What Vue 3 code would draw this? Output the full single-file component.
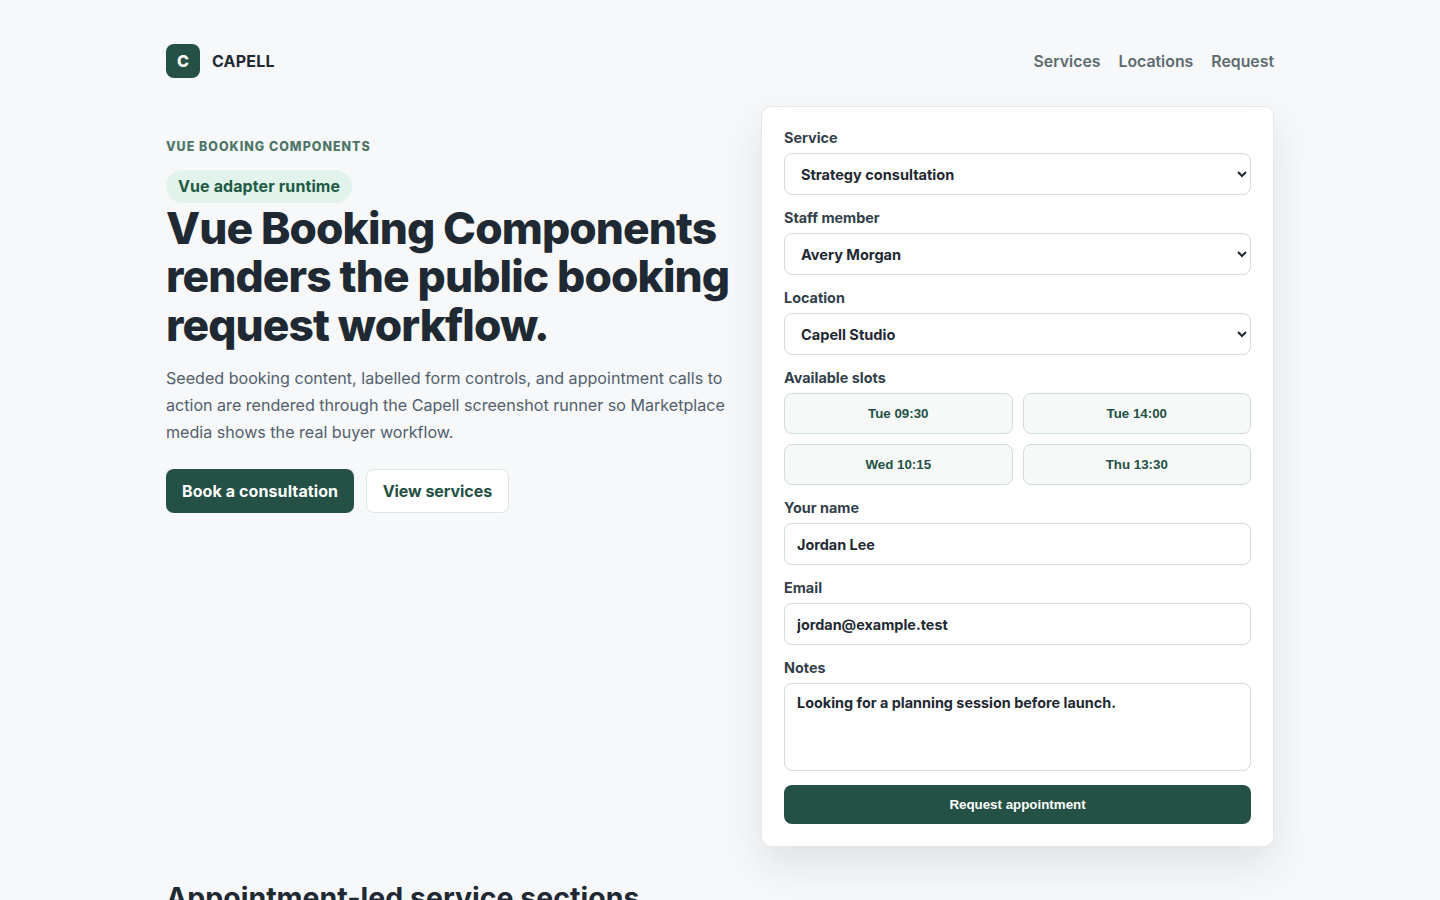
<script setup>
const links = ['Services', 'Locations', 'Request']
const slots = ['Tue 09:30', 'Tue 14:00', 'Wed 10:15', 'Thu 13:30']
const selects = [
  { label: 'Service', value: 'Strategy consultation' },
  { label: 'Staff member', value: 'Avery Morgan' },
  { label: 'Location', value: 'Capell Studio' },
]
</script>

<template>
  <div class="page">
    <header class="header">
      <a class="brand" href="#">
        <span class="mark">C</span>
        <span class="brand-name">CAPELL</span>
      </a>
      <nav class="nav">
        <a v-for="link in links" :key="link" href="#">{{ link }}</a>
      </nav>
    </header>

    <main class="hero">
      <section class="intro">
        <p class="eyebrow">VUE BOOKING COMPONENTS</p>
        <span class="pill">Vue adapter runtime</span>
        <h1>Vue Booking Components renders the public booking request workflow.</h1>
        <p class="lead">
          Seeded booking content, labelled form controls, and appointment calls to action are rendered through the Capell screenshot runner so Marketplace media shows the real buyer workflow.
        </p>
        <div class="actions">
          <a class="btn primary" href="#">Book a consultation</a>
          <a class="btn secondary" href="#">View services</a>
        </div>
      </section>

      <form class="card" @submit.prevent>
        <label v-for="item in selects" :key="item.label" class="field">
          <span>{{ item.label }}</span>
          <select class="select">
            <option>{{ item.value }}</option>
          </select>
        </label>

        <div class="field">
          <span>Available slots</span>
          <div class="slots">
            <button v-for="slot in slots" :key="slot" type="button" class="slot">{{ slot }}</button>
          </div>
        </div>

        <label class="field">
          <span>Your name</span>
          <input class="input" type="text" value="Jordan Lee">
        </label>
        <label class="field">
          <span>Email</span>
          <input class="input" type="email" value="jordan@example.test">
        </label>
        <label class="field">
          <span>Notes</span>
          <textarea class="input notes">Looking for a planning session before launch.</textarea>
        </label>

        <button type="submit" class="submit">Request appointment</button>
      </form>
    </main>

    <section class="services">
      <h2>Appointment-led service sections</h2>
    </section>
  </div>
</template>

<style>
html, body {
  background: #f6f8f9;
}
</style>

<style scoped>
.page {
  box-sizing: border-box;
  width: 1108px;
  margin: 0 auto;
  font-family: Inter, "Liberation Sans", sans-serif;
  color: #1f2933;
}

a {
  text-decoration: none;
}

.header {
  display: flex;
  align-items: center;
  justify-content: space-between;
  padding: 44px 0 28px;
}

.brand {
  display: flex;
  align-items: center;
  gap: 12px;
  color: #1f2933;
}

.mark {
  display: flex;
  align-items: center;
  justify-content: center;
  width: 34px;
  height: 34px;
  border-radius: 8px;
  background: #245045;
  color: #fff;
  font-size: 16px;
  font-weight: 800;
}

.brand-name {
  font-size: 16px;
  font-weight: 700;
  letter-spacing: 0.2px;
}

.nav {
  display: flex;
  gap: 18px;
}

.nav a {
  color: #5d6b70;
  font-size: 15.84px;
  font-weight: 600;
}

.hero {
  display: grid;
  grid-template-columns: 567px 513px;
  gap: 28px;
  align-items: start;
}

.intro {
  padding-top: 33px;
}

.eyebrow {
  margin: 0 0 15px;
  color: #4d7567;
  font-size: 12.48px;
  line-height: 16px;
  font-weight: 800;
  letter-spacing: 0.08em;
}

.pill {
  display: inline-block;
  padding: 6px 12px;
  border-radius: 999px;
  background: #e1f3ea;
  color: #1f5a46;
  font-size: 16px;
  line-height: 21px;
  font-weight: 700;
  letter-spacing: 0.1px;
}

h1 {
  margin: 0.6px 0 15.3px;
  font-size: 44.3px;
  line-height: 48.6px;
  font-weight: 800;
  letter-spacing: -0.02em;
}

.lead {
  margin: 0 0 23px;
  color: #52606d;
  font-size: 16.1px;
  line-height: 27px;
}

.actions {
  display: flex;
  gap: 12px;
}

.btn {
  display: flex;
  align-items: center;
  box-sizing: border-box;
  height: 44px;
  padding: 0 16px;
  border-radius: 8px;
  font-size: 16px;
  font-weight: 700;
}

.primary {
  background: #245045;
  color: #fff;
  letter-spacing: 0.1px;
}

.secondary {
  padding: 0 15.5px;
  border: 1px solid #dfe6e6;
  background: #fff;
  color: #245045;
  letter-spacing: -0.05px;
}

.card {
  display: flex;
  flex-direction: column;
  gap: 14px;
  padding: 22px;
  border: 1px solid #e3e8ea;
  border-radius: 10px;
  background: #fff;
  box-shadow: 0 18px 40px rgba(31, 41, 51, 0.1);
}

.field {
  display: flex;
  flex-direction: column;
  gap: 7px;
  color: #323f4b;
  font-size: 14.4px;
  line-height: 17px;
  font-weight: 700;
}

.select,
.input {
  box-sizing: border-box;
  width: 100%;
  height: 42px;
  border: 1px solid #cfdcdb;
  border-radius: 8px;
  background: #fff;
  color: #1f2933;
  font-family: inherit;
  font-size: 14.4px;
  font-weight: 700;
}

.select {
  padding: 2px 12px 0;
  font-size: 14.55px;
}

.input {
  padding: 0 12px;
}

.notes {
  display: block;
  height: 88px;
  padding: 10px 12px;
  line-height: 17px;
  resize: none;
}

.slots {
  display: grid;
  grid-template-columns: 1fr 1fr;
  gap: 10px;
}

.slot {
  height: 41px;
  border: 1px solid #cfdcdb;
  border-radius: 8px;
  background: #f7f9f9;
  color: #245045;
  font-family: "Liberation Sans", Arial, sans-serif;
  font-size: 13.33px;
  font-weight: 700;
}

.submit {
  height: 39px;
  border: 0;
  border-radius: 8px;
  background: #245045;
  color: #fff;
  font-family: "Liberation Sans", Arial, sans-serif;
  font-size: 13.33px;
  font-weight: 700;
}

.services {
  padding-top: 33px;
}

h2 {
  margin: 0;
  font-size: 28.5px;
  line-height: 36px;
  font-weight: 700;
}
</style>
